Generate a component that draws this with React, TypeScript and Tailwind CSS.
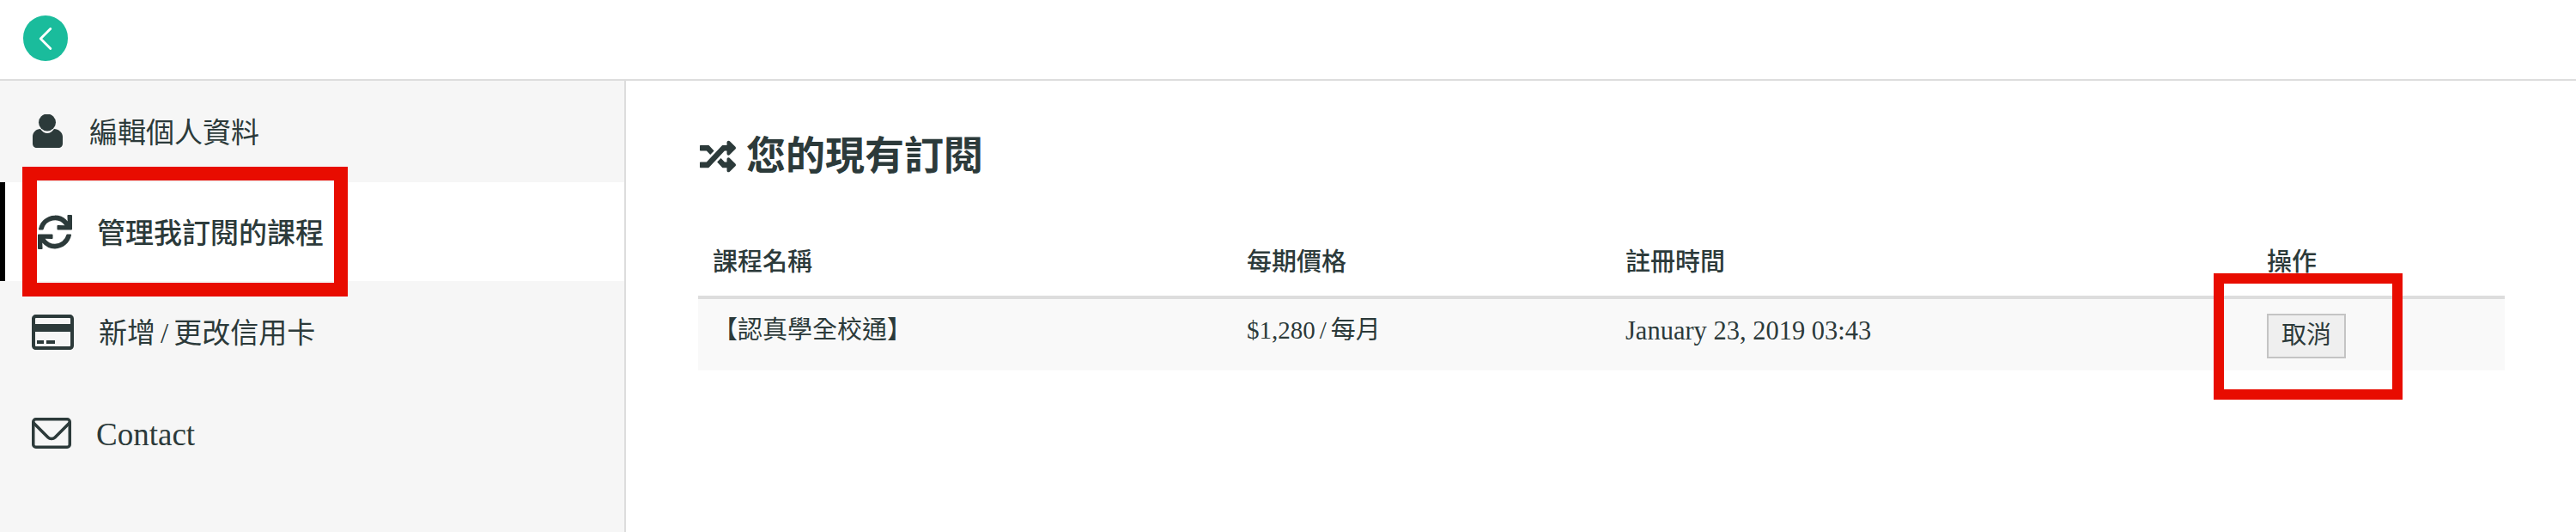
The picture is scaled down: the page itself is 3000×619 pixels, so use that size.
import { FaRandom, FaSync } from "react-icons/fa";
import { ChevronLeft } from "lucide-react";

const ink = "text-[#2c3a3a]";

function UserIcon() {
  return (
    <svg viewBox="0 0 37 40" className="h-10 w-[37px] fill-current">
      <circle cx="18" cy="9.500" r="10" />
      <path d="M1 34v-8c0-5 4-9 9-9 2 3 5 5 8 5s6-2 8-5c5 0 10 4 10 9v8c0 3-2 5-5 5H6c-3 0-5-2-5-5z" />
    </svg>
  );
}

function CardIcon() {
  return (
    <svg viewBox="0 0 49 41" className="h-[41px] w-[49px] fill-current">
      <path
        fillRule="evenodd"
        d="M5 0h39c3 0 5 2 5 5v31c0 3-2 5-5 5H5c-3 0-5-2-5-5V5c0-3 2-5 5-5zM4 5v6h41V5c0-.500-.500-1-1-1H5c-.500 0-1 .500-1 1zm0 15v16c0 .500.500 1 1 1h39c.500 0 1-.500 1-1V20zm2 10h8v4H6zm11 0h10v4H17z"
      />
    </svg>
  );
}

function MailIcon() {
  return (
    <svg viewBox="0 0 46 36" className="h-9 w-[46px] fill-none stroke-current stroke-[3.5]">
      <rect x="1.750" y="1.750" width="42.500" height="32.500" rx="3" />
      <path d="M2 6l17 17c2 2 6 2 8 0L44 6" />
    </svg>
  );
}

const rowClass = "flex items-center pl-[37px]";

export default function App() {
  return (
    <div
      className={`flex h-[619px] flex-col bg-white ${ink}`}
      style={{ fontFamily: '"Liberation Serif", "Noto Sans CJK TC", serif' }}
    >
      <header className="flex h-[94px] shrink-0 items-start border-b-[2px] border-[#dddddd] pl-[27px] pt-[18px]">
        <button type="button" className="flex h-[53px] w-[52px] items-center justify-center rounded-full bg-[#1abc9c] text-white">
          <ChevronLeft size={46} strokeWidth={1.500} />
        </button>
      </header>

      <div className="flex min-h-0 flex-1">
        <aside className="flex w-[729px] shrink-0 flex-col border-r-[2px] border-[#dddddd] bg-[#f6f6f6] text-[33px]">
          <div className={`${rowClass} h-[118px]`}>
            <UserIcon />
            <span className="ml-[30px] pt-[6px]">編輯個人資料</span>
          </div>
          <div className="relative flex h-[115px] items-center bg-white pl-[44px] font-medium">
            <div className="absolute bottom-0 left-0 top-0 w-[6px] bg-black" />
            <FaSync className="h-10 w-10" />
            <span className="ml-[29px] pt-[6px]">管理我訂閱的課程</span>
          </div>
          <div className={`${rowClass} h-[118px]`}>
            <CardIcon />
            <span className="ml-[29px] pt-[6px]">
              新增<span className="mx-[6px]">/</span>更改信用卡
            </span>
          </div>
          <div className={`${rowClass} h-[118px]`}>
            <MailIcon />
            <span className="ml-[29px] pt-[4px] text-[37px]">Contact</span>
          </div>
        </aside>

        <main className="min-w-0 flex-1 pl-[84px] pr-[83px] pt-[62px]">
          <h2 className="flex items-center text-[46px] font-bold leading-[52px]">
            <FaRandom className="h-[42px] w-[46px]" />
            <span className="ml-[10px]">您的現有訂閱</span>
          </h2>
          <table className="mt-[76px] w-full table-fixed border-collapse text-[29px]">
            <thead>
              <tr className="border-b-[4px] border-[#dddddd] text-left">
                <th className="h-[60px] w-[639px] pb-[16px] pl-[17px] font-medium">課程名稱</th>
                <th className="w-[441px] pb-[16px] font-medium">每期價格</th>
                <th className="w-[747px] pb-[16px] font-medium">註冊時間</th>
                <th className="pb-[16px] font-medium">操作</th>
              </tr>
            </thead>
            <tbody>
              <tr className="h-[85px] bg-[#f9f9f9] align-top">
                <td className="pl-[17px] pt-[15px]">【認真學全校通】</td>
                <td className="pt-[15px]">
                  $1,280<span className="mx-[5px]">/</span>每月
                </td>
                <td className="pt-[15px] text-[30.500px]">January 23, 2019 03:43</td>
                <td className="pt-[17px]">
                  <button
                    type="button"
                    className="h-[52px] w-[92px] border-2 border-[#c4c4c4] bg-[#efefef] text-[29px]"
                  >
                    取消
                  </button>
                </td>
              </tr>
            </tbody>
          </table>
        </main>
      </div>

      {/* annotation boxes drawn over the screenshot */}
      <div className="absolute left-[26px] top-[194px] h-[151px] w-[379px] border-y-[16px] border-l-[17px] border-r-[16px] border-[#e80c00]" />
      <div className="absolute left-[2578px] top-[318px] h-[147px] w-[220px] border-[12px] border-[#e80c00]" />
    </div>
  );
}
